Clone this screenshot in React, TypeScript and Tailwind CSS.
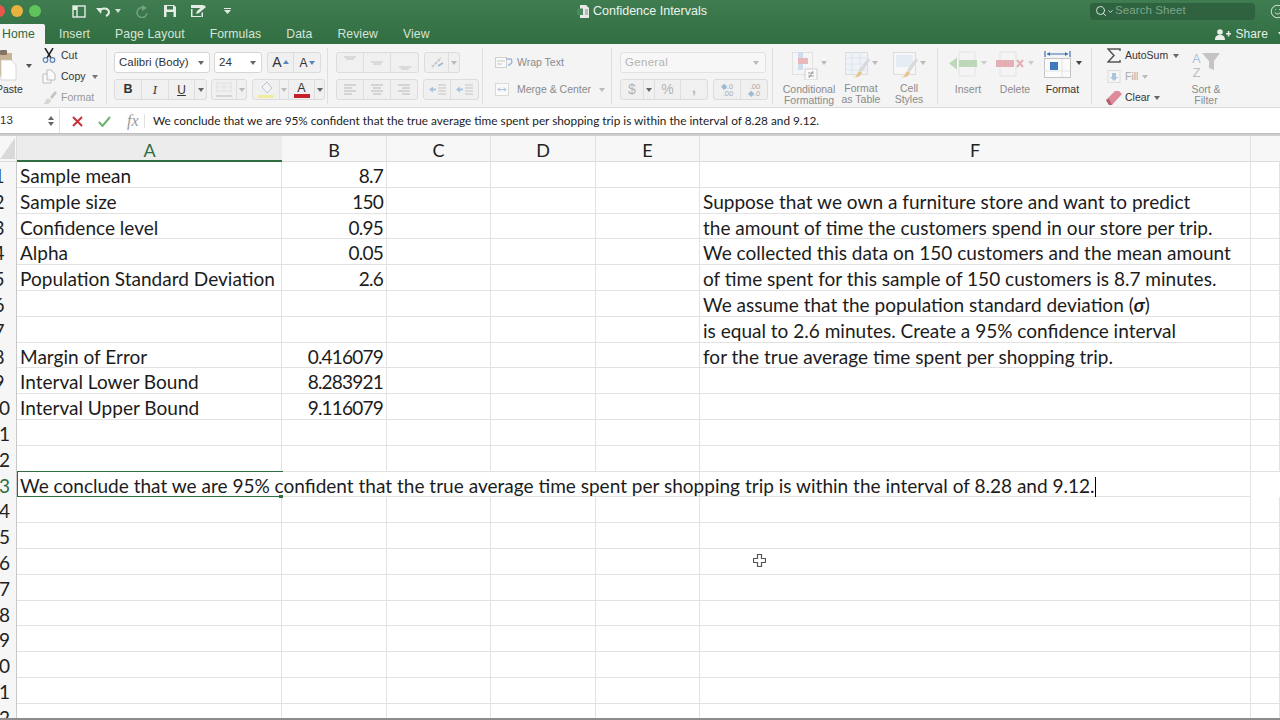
import React from "react";
import { Search, ChevronDown, Smile } from "lucide-react";

const cellFont = { fontFamily: "Lato, sans-serif" };

const tabs = ["Insert", "Page Layout", "Formulas", "Data", "Review", "View"];
const columns = ["B", "C", "D", "E"];

const sheetRows = [
    { a: "Sample mean", b: "8.7", f: "" },
    { a: "Sample size", b: "150", f: "Suppose that we own a furniture store and want to predict" },
    { a: "Confidence level", b: "0.95", f: "the amount of time the customers spend in our store per trip." },
    { a: "Alpha", b: "0.05", f: "We collected this data on 150 customers and the mean amount" },
    { a: "Population Standard Deviation", b: "2.6", f: "of time spent for this sample of 150 customers is 8.7 minutes." },
    { a: "", b: "", f: "sigma" },
    { a: "", b: "", f: "is equal to 2.6 minutes. Create a 95% confidence interval" },
    { a: "Margin of Error", b: "0.416079", f: "for the true average time spent per shopping trip." },
    { a: "Interval Lower Bound", b: "8.283921", f: "" },
    { a: "Interval Upper Bound", b: "9.116079", f: "" },
    { a: "", b: "", f: "" },
    { a: "", b: "", f: "" },
];

const conclusion = "We conclude that we are 95% confident that the true average time spent per shopping trip is within the interval of 8.28 and 9.12.";

const Caret = ({ className = "text-[#666]" }: { className?: string }) => (
    <svg width="6" height="4" viewBox="0 0 6 4" className={`shrink-0 ${className}`}>
        <path d="M0 0h6L3 4z" fill="currentColor" />
    </svg>
);

const RowHeader = ({ n, active }: { n: number; active?: boolean }) => (
    <div className="h-full overflow-hidden bg-[#f6f6f6] border-r border-[#c9c9c9]">
        <div className={`w-[36px] -ml-[19px] text-center text-[19px] leading-[27px] ${active ? "text-[#2f6e41]" : "text-[#222]"}`}>{n}</div>
    </div>
);

const SegButton = ({ w, children, last }: { w: number; children?: React.ReactNode; last?: boolean }) => (
    <div style={{ width: w }} className={`h-full flex items-center justify-center ${last ? "" : "border-r border-[#dedede]"}`}>
        {children}
    </div>
);

const Seg = ({ children, bg = "bg-[#f0f0f0]" }: { children: React.ReactNode; bg?: string }) => (
    <div className={`flex h-full rounded-[3px] border border-[#dcdcdc] ${bg}`}>{children}</div>
);

const Lines = ({ kind }: { kind: "left" | "center" | "right" }) => {
    const rows = kind === "left" ? "M1 1h12M1 4h8M1 7h12M1 10h8" : kind === "center" ? "M1 1h12M3 4h8M1 7h12M3 10h8" : "M1 1h12M5 4h8M1 7h12M5 10h8";
    return (
        <svg width="14" height="11" viewBox="0 0 14 11">
            <path d={rows} stroke="#b8b8b8" strokeWidth="1" fill="none" />
        </svg>
    );
};

const TitleBar = () => (
    <div className="h-[24px] flex items-center relative pb-[2px]">
        {/* traffic lights */}
        <div className="flex gap-[6px] -ml-[7px] w-[72px] shrink-0">
            <span className="w-[12px] h-[12px] rounded-full bg-[#e8574e]" />
            <span className="w-[12px] h-[12px] rounded-full bg-[#e9b23f]" />
            <span className="w-[12px] h-[12px] rounded-full bg-[#5fc45b]" />
        </div>
        <div className="flex items-center text-[#e4ece6] ml-[7px]">
            <svg width="14" height="13" viewBox="0 0 14 13" className="mr-[10px]">
                <rect x="1" y="1" width="12" height="11" fill="none" stroke="currentColor" strokeWidth="1.4" />
                <path d="M5 1v11" stroke="currentColor" strokeWidth="1.4" />
                <path d="M1 1h4v4h-4z" fill="currentColor" />
            </svg>
            <svg width="15" height="11" viewBox="0 0 15 11" className="mr-[4px]">
                <path d="M3 5c2-3 9-4 10 1 0 2-1 3-3 4" fill="none" stroke="currentColor" strokeWidth="2" />
                <path d="M0 2l6 0-1 6z" fill="currentColor" />
            </svg>
            <Caret className="text-[#d5e0d8] mr-[15px]" />
            <svg width="13" height="13" viewBox="0 0 13 13" className="mr-[14px] text-[#76a183]">
                <path d="M9 3.5A5 5 0 1 0 11 8" fill="none" stroke="currentColor" strokeWidth="1.5" />
                <path d="M6 0v6l5-3z" fill="currentColor" />
            </svg>
            <svg width="14" height="14" viewBox="0 0 14 14" className="mr-[13px]">
                <path d="M1 1h10l2 2v10H1z" fill="currentColor" />
                <rect x="4" y="2" width="6" height="3.5" fill="#3b7a4c" />
                <rect x="3.5" y="8" width="7" height="5" fill="#3b7a4c" />
            </svg>
            <svg width="17" height="14" viewBox="0 0 17 14" className="mr-[17px]">
                <path d="M1 1h12v3H1zM1 5h1.500v8H1zM1 12h11v1H1zM11.500 9v4H13V8z" fill="currentColor" />
                <path d="M6 10l1-3 7-6 2 2-7 6z" fill="currentColor" />
            </svg>
            <svg width="7" height="6" viewBox="0 0 7 6">
                <path d="M0 0h7v1H0zM0 2h7L3.500 6z" fill="currentColor" />
            </svg>
        </div>
        <div className="absolute left-[577px] top-[2px] flex items-center gap-[4px] text-[12.500px] text-[#eef3ef]">
            <svg width="12" height="13" viewBox="0 0 12 13">
                <path d="M3 0h6l3 3v10H3z" fill="#e8e8e8" />
                <rect x="0" y="3.500" width="6" height="6.500" fill="#4c8a5e" />
                <path d="M8 5h3M8 7h3M8 9h3" stroke="#8a8a8a" />
            </svg>
            Confidence Intervals
        </div>
        <div className="ml-auto flex items-center">
            <div className="w-[165px] h-[17px] rounded-[3px] bg-[#2f6340] flex items-center pl-[5px] text-[11.500px] text-[#7da68a]">
                <Search size={12} strokeWidth={2} className="text-[#dbe6de]" />
                <ChevronDown size={7} strokeWidth={3} className="text-[#dbe6de] mr-[1px]" />
                <span className="tracking-[0.1px]">Search Sheet</span>
            </div>
            <Smile size={15} strokeWidth={1.5} className="text-[#e4ece6] ml-[15px] -mr-[5px]" />
        </div>
    </div>
);

const Tabs = () => (
    <div className="h-[20px] flex items-end text-[12.200px] tracking-[0.1px]">
        <div className="w-[45px] h-full bg-[#f4f4f4] rounded-tr-[2px] text-[#2d6a3e] pl-[2px] leading-[20px]">Home</div>
        <div className="flex gap-[25px] pl-[14px] text-[#d7e3da] leading-[20px] h-full">
            {tabs.map((t) => (
                <span key={t}>{t}</span>
            ))}
        </div>
        <div className="ml-auto flex items-center h-full text-[#e8efe9] text-[12px] leading-[20px] gap-[4px] -mr-[4px]">
            <svg width="16" height="11" viewBox="0 0 16 11">
                <circle cx="5" cy="3" r="2.800" fill="currentColor" />
                <path d="M0 11c0-4 2-5 5-5s5 1 5 5zM11 4h5v1.500h-5zM12.800 2h1.500v5.500h-1.500z" fill="currentColor" />
            </svg>
            Share
            <Caret className="text-[#e8efe9] ml-[6px]" />
        </div>
    </div>
);

const ClipboardGroup = () => (
    <div className="w-[107px] h-[56px] shrink-0 flex overflow-hidden text-[10.500px] border-r border-[#dfdfdf]">
        <div className="w-[42px] shrink-0 flex flex-col">
            <div className="flex items-center h-[33px] pt-[2px]">
                <svg width="22" height="31" viewBox="0 0 22 31" className="-ml-[5px] shrink-0">
                    <rect x="0" y="3" width="17" height="23" rx="1" fill="#c9b394" />
                    <rect x="5" y="0" width="7" height="5" rx="1" fill="#7f7466" />
                    <path d="M6 10h10l5 5v15H6z" fill="#fff" stroke="#c8c8c8" strokeWidth="0.700" />
                </svg>
                <Caret className="text-[#555] ml-[9px]" />
            </div>
            <span className="text-[#333] mt-[1px] leading-[14px] -ml-[4px]">Paste</span>
        </div>
        <div className="flex flex-col gap-[6px] text-[#333]">
            <div className="flex items-center h-[15px]">
                <svg width="14" height="15" viewBox="0 0 14 15" className="mr-[5px]">
                    <path d="M3 0l6 10M11 0L5 10" stroke="#222" strokeWidth="1.500" />
                    <circle cx="3.500" cy="12" r="2.300" fill="none" stroke="#5a83b5" strokeWidth="1.200" />
                    <circle cx="10.500" cy="12" r="2.300" fill="none" stroke="#5a83b5" strokeWidth="1.200" />
                </svg>
                Cut
            </div>
            <div className="flex items-center h-[15px]">
                <svg width="14" height="15" viewBox="0 0 14 15" className="mr-[5px]">
                    <path d="M5 1h4l4 4v6H5zM5 5H1v9h8v-3" fill="#fafafa" stroke="#bcbcbc" />
                </svg>
                Copy
                <Caret className="text-[#777] ml-[6px]" />
            </div>
            <div className="flex items-center h-[15px] text-[#999]">
                <svg width="15" height="14" viewBox="0 0 15 14" className="mr-[4px]">
                    <path d="M8 6l5-6 2 2-5 6z" fill="#c4c4c4" />
                    <path d="M0 13c3 0 3-2 4-4 1-2 3-2 5 0 0 3-3 5-9 4z" fill="#d6d6d6" />
                </svg>
                Format
            </div>
        </div>
    </div>
);

const FontGroup = () => (
    <div className="w-[221px] h-[56px] shrink-0 pl-[7px] pt-[4px] flex flex-col gap-[6px] text-[#333] border-r border-[#dfdfdf]">
        <div className="flex h-[21px] gap-[4px]">
            <div className="w-[96px] h-full bg-white border border-[#d6d6d6] rounded-[3px] flex items-center justify-between px-[4px] text-[11.500px]">
                Calibri (Body)<Caret className="text-[#666] mr-[1px]" />
            </div>
            <div className="w-[48px] h-full bg-white border border-[#d6d6d6] rounded-[3px] flex items-center justify-between px-[4px] text-[11.500px]">
                24<Caret className="text-[#666] mr-[1px]" />
            </div>
            <div className="ml-[1px]">
                <Seg>
                    <SegButton w={26}>
                        <span className="text-[14px]">A</span>
                        <svg width="6" height="4" viewBox="0 0 6 4" className="ml-[1px] mb-[2px]"><path d="M0 4h6L3 0z" fill="#5a83b5" /></svg>
                    </SegButton>
                    <SegButton w={26} last>
                        <span className="text-[12px]">A</span>
                        <svg width="6" height="4" viewBox="0 0 6 4" className="ml-[1px]"><path d="M0 0h6L3 4z" fill="#5a83b5" /></svg>
                    </SegButton>
                </Seg>
            </div>
        </div>
        <div className="flex h-[21px] gap-[4px]">
            <Seg>
                <SegButton w={27}><span className="font-bold text-[12.500px]">B</span></SegButton>
                <SegButton w={27}><span className="italic font-serif text-[13px]">I</span></SegButton>
                <SegButton w={26}><span className="underline text-[12px]">U</span></SegButton>
                <SegButton w={11} last><Caret className="text-[#666]" /></SegButton>
            </Seg>
            <Seg>
                <SegButton w={25}>
                    <svg width="16" height="15" viewBox="0 0 16 15"><path d="M0 1h16M0 5h16M0 9h16M1 1v9M8 1v9M15 1v9" stroke="#e2e2e2" /><path d="M0 14h16" stroke="#bbb" /></svg>
                </SegButton>
                <SegButton w={9} last><Caret className="text-[#bbb]" /></SegButton>
            </Seg>
            <div className="ml-[1px]">
                <Seg>
                    <SegButton w={27}>
                        <svg width="16" height="18" viewBox="0 0 16 18"><path d="M4 6l5-5 5 6-5 5z" fill="#f4f4f4" stroke="#b9c4cf" /><rect x="0" y="14" width="16" height="3" fill="#f0ec9c" /></svg>
                    </SegButton>
                    <SegButton w={9}><Caret className="text-[#bbb]" /></SegButton>
                    <SegButton w={26}>
                        <div className="flex flex-col items-center leading-[12px] text-[12.500px]">
                            A
                            <span className="w-[16px] h-[4px] bg-[#c8202b]" />
                        </div>
                    </SegButton>
                    <SegButton w={9} last><Caret className="text-[#666]" /></SegButton>
                </Seg>
            </div>
        </div>
    </div>
);

const AlignmentGroup = () => (
    <div className="w-[155px] h-[56px] shrink-0 pl-[8px] pt-[4px] flex flex-col gap-[6px] border-r border-[#dfdfdf]">
        <div className="flex h-[21px] gap-[5px]">
            <Seg>
                {[4, 9, 14].map((y, i) => (
                    <SegButton key={y} w={27} last={i === 2}>
                        <svg width="14" height="17" viewBox="0 0 14 17"><path d={`M1 ${y - 1}h12M3 ${y + 1}h8`} stroke="#c4c4c4" /></svg>
                    </SegButton>
                ))}
            </Seg>
            <Seg>
                <SegButton w={24}>
                    <svg width="14" height="13" viewBox="0 0 14 13"><path d="M2 11L11 2" stroke="#c8c8c8" strokeWidth="2" strokeDasharray="3 1" /><path d="M8 10l5-3" stroke="#9db5d0" strokeWidth="1.500" /></svg>
                </SegButton>
                <SegButton w={10} last><Caret className="text-[#bbb]" /></SegButton>
            </Seg>
        </div>
        <div className="flex h-[21px] gap-[5px]">
            <Seg>
                <SegButton w={27}><Lines kind="left" /></SegButton>
                <SegButton w={27}><Lines kind="center" /></SegButton>
                <SegButton w={26} last><Lines kind="right" /></SegButton>
            </Seg>
            <Seg>
                {[0, 1].map((i) => (
                    <SegButton key={i} w={27} last={i === 1}>
                        <svg width="17" height="11" viewBox="0 0 17 11"><path d="M0 5.500l4-3v6zM4 4.500h3v2H4z" fill="#a9c3de" /><path d="M9 1h8M9 4h8M9 7h8M9 10h8" stroke="#c4c4c4" /></svg>
                    </SegButton>
                ))}
            </Seg>
        </div>
    </div>
);

const WrapGroup = () => (
    <div className="w-[129px] h-[56px] shrink-0 pl-[12px] pt-[4px] flex flex-col gap-[6px] text-[10.500px] text-[#8b8b8b] border-r border-[#dfdfdf]">
        <div className="flex items-center h-[21px]">
            <svg width="18" height="13" viewBox="0 0 18 13" className="mr-[4px]">
                <rect x="0.500" y="1.500" width="11" height="10" fill="#fafafa" stroke="#d0d0d0" />
                <path d="M2 5h8M2 8h5" stroke="#c4c4c4" />
                <path d="M11 3h5c2 3 0 6-3 6" fill="none" stroke="#9db9d6" strokeWidth="1.500" />
            </svg>
            Wrap Text
        </div>
        <div className="flex items-center h-[21px]">
            <svg width="18" height="13" viewBox="0 0 18 13" className="mr-[4px]">
                <rect x="0.500" y="0.500" width="13" height="12" fill="#fafafa" stroke="#dadada" />
                <path d="M3 6.500h8M3 6.500l2-2M3 6.500l2 2M11 6.500l-2-2M11 6.500l-2 2" stroke="#a6bed7" fill="none" />
            </svg>
            Merge &amp; Center
            <Caret className="text-[#bbb] ml-[8px]" />
        </div>
    </div>
);

const NumberGroup = () => (
    <div className="w-[161px] h-[56px] shrink-0 pl-[8px] pt-[4px] flex flex-col gap-[6px] text-[#b4b4b4] border-r border-[#dfdfdf]">
        <div className="w-[146px] h-[21px] shrink-0 bg-[#f7f7f7] border border-[#e2e2e2] rounded-[3px] flex items-center justify-between px-[4px] text-[11.500px] tracking-[0.3px]">
            General<Caret className="text-[#bbb] mr-[2px]" />
        </div>
        <div className="flex h-[21px] gap-[5px] text-[14px]">
            <Seg>
                <SegButton w={23}>$</SegButton>
                <SegButton w={11}><Caret className="text-[#666]" /></SegButton>
                <SegButton w={26}>%</SegButton>
                <SegButton w={26} last><span className="font-bold leading-[8px] -mt-[4px]">,</span></SegButton>
            </Seg>
            <Seg>
                <SegButton w={27}>
                    <div className="flex flex-col text-[7.500px] leading-[7px] items-end text-[#aaa]"><span><span className="text-[#9db9d6]">◆</span>.0</span><span>.00</span></div>
                </SegButton>
                <SegButton w={26} last>
                    <div className="flex flex-col text-[7.500px] leading-[7px] items-end text-[#aaa]"><span>.00</span><span><span className="text-[#9db9d6]">◆</span>.0</span></div>
                </SegButton>
            </Seg>
        </div>
    </div>
);

const BrushGrid = ({ colored }: { colored?: boolean }) => (
    <svg width="26" height="27" viewBox="0 0 26 27">
        <rect x="0.500" y="0.500" width="22" height="22" fill={colored ? "#eef3f9" : "#f7f7f7"} stroke="#dcdcdc" />
        {colored ? <path d="M0 6h22M0 12h22M0 18h22M7 0v22M15 0v22" stroke="#dfe4ea" /> : <rect x="3" y="3" width="17" height="12" fill="#e6ecf4" />}
        <path d="M14 18l9-12 2 2-8 12z" fill="#d9d9d9" />
        <path d="M8 25c3 0 4-2 5-5 2-2 4 0 4 1-1 3-4 5-9 4z" fill="#e8c48f" />
    </svg>
);

const StylesGroup = () => (
    <div className="w-[165px] h-[56px] shrink-0 flex pt-[4px] pl-[6px] text-[10.500px] text-[#8b8b8b] text-center leading-[11px] border-r border-[#dfdfdf]">
        <div className="w-[60px] flex flex-col items-center">
            <div className="h-[28px] flex items-start">
                <svg width="26" height="28" viewBox="0 0 26 28">
                    <rect x="0.500" y="0.500" width="20" height="22" fill="#f5f5f5" stroke="#e2e2e2" />
                    <rect x="6" y="0" width="5" height="18" fill="#cfdcec" />
                    <rect x="6" y="6" width="10" height="6" fill="#e8b9bb" />
                    <rect x="13" y="17" width="12" height="11" fill="#fafafa" stroke="#cfcfcf" />
                    <path d="M16 21h6M16 24h6M21 19l-4 7" stroke="#888" strokeWidth="0.800" />
                </svg>
                <Caret className="text-[#bbb] mt-[9px] ml-[3px]" />
            </div>
            <span className="mt-[4px]">Conditional<br />Formatting</span>
        </div>
        <div className="w-[44px] flex flex-col items-center">
            <div className="h-[28px] flex items-start">
                <BrushGrid colored />
                <Caret className="text-[#bbb] mt-[9px] ml-[1px]" />
            </div>
            <span className="mt-[4px]">Format<br />as Table</span>
        </div>
        <div className="w-[44px] ml-[4px] flex flex-col items-center">
            <div className="h-[28px] flex items-start">
                <BrushGrid />
                <Caret className="text-[#bbb] mt-[9px] ml-[1px]" />
            </div>
            <span className="mt-[4px]">Cell<br />Styles</span>
        </div>
    </div>
);

const CellsGroup = () => (
    <div className="w-[154px] h-[56px] shrink-0 flex pt-[3px] pl-[6px] text-[10.500px] text-[#8b8b8b] border-r border-[#dfdfdf]">
        <div className="w-[48px] flex flex-col items-center">
            <div className="h-[30px] flex items-start">
                <svg width="29" height="26" viewBox="0 0 29 26">
                    <path d="M10 1h16v24H10z" fill="none" stroke="#e4e4e4" />
                    <rect x="10" y="9" width="18" height="7" fill="#bcd8b9" />
                    <path d="M0 12.500l8-6v12z" fill="#bcd8b9" />
                </svg>
                <Caret className="text-[#ccc] mt-[10px] ml-[3px]" />
            </div>
            <span className="leading-[13px] mt-[2px]">Insert</span>
        </div>
        <div className="w-[46px] flex flex-col items-center">
            <div className="h-[30px] flex items-start">
                <svg width="29" height="26" viewBox="0 0 29 26">
                    <path d="M4 1h16v24H4z" fill="none" stroke="#e4e4e4" />
                    <rect x="0" y="9" width="18" height="7" fill="#e4aeb4" />
                    <path d="M21 9l6 7M27 9l-6 7" stroke="#e4aeb4" strokeWidth="2" />
                </svg>
                <Caret className="text-[#ccc] mt-[10px] ml-[3px]" />
            </div>
            <span className="leading-[13px] mt-[2px]">Delete</span>
        </div>
        <div className="w-[49px] flex flex-col items-center text-[#333]">
            <div className="h-[30px] flex items-start">
                <svg width="27" height="27" viewBox="0 0 27 27">
                    <path d="M1 0v6M26 0v6M3 3h21" stroke="#3c6fb0" strokeWidth="1.200" />
                    <path d="M3 3l3-2v4zM24 3l-3-2v4z" fill="#3c6fb0" />
                    <rect x="0.500" y="7.500" width="26" height="19" fill="#fbfbfb" stroke="#c4c4c4" />
                    <path d="M0 20h26M18 8v18" stroke="#e2e2e2" />
                    <rect x="6" y="11" width="8" height="8" fill="#3e78bd" />
                </svg>
                <Caret className="text-[#444] mt-[10px] ml-[5px]" />
            </div>
            <span className="leading-[13px] mt-[2px]">Format</span>
        </div>
    </div>
);

const EditGroup = () => (
    <div className="flex-1 h-[56px] flex pl-[15px] text-[10.500px] text-[#333]">
        <div className="flex flex-col gap-[6px] w-[83px] shrink-0">
            <div className="flex items-center h-[15px]">
                <svg width="14" height="15" viewBox="0 0 14 15" className="mr-[4px]">
                    <path d="M13 3V1H1l6 6.500L1 14h12v-2" fill="none" stroke="#555" strokeWidth="1.500" />
                </svg>
                AutoSum
                <Caret className="text-[#666] ml-[5px]" />
            </div>
            <div className="flex items-center h-[15px] text-[#aaa]">
                <svg width="14" height="13" viewBox="0 0 14 13" className="mr-[4px]">
                    <rect x="1" y="0.500" width="12" height="12" fill="#f5f5f5" stroke="#dcdcdc" />
                    <path d="M5 3h4v4h2l-4 4-4-4h2z" fill="#a9c3de" />
                </svg>
                Fill
                <Caret className="text-[#bbb] ml-[4px]" />
            </div>
            <div className="flex items-center h-[15px]">
                <svg width="16" height="14" viewBox="0 0 16 14" className="-ml-[1px] mr-[3px]">
                    <path d="M0 9l9-9h4l3 3-10 11H3z" fill="#dd8a9a" />
                    <path d="M0 9l3 5h3L3 8z" fill="#b05f70" />
                </svg>
                Clear
                <Caret className="text-[#666] ml-[4px]" />
            </div>
        </div>
        <div className="flex flex-col items-center pt-[4px] w-[32px] text-[#8b8b8b] leading-[11px] text-center">
            <div className="h-[28px] flex items-start">
                <div className="flex flex-col text-[12.500px] leading-[14px] w-[11px] items-center shrink-0">
                    <span className="text-[#a9c3de]">A</span>
                    <span className="text-[#bdbdbd]">Z</span>
                </div>
                <svg width="19" height="19" viewBox="0 0 19 19" className="shrink-0">
                    <path d="M0 1h18l-6 8v9l-5-2V9z" fill="#c4c4c4" />
                </svg>
            </div>
            <span className="mt-[4px] whitespace-nowrap">Sort &amp;<br />Filter</span>
        </div>
    </div>
);

const Ribbon = () => (
    <div className="h-[64px] bg-[#f4f4f4] flex pt-[4px] border-b border-[#dbdbdb]">
        <ClipboardGroup />
        <FontGroup />
        <AlignmentGroup />
        <WrapGroup />
        <NumberGroup />
        <StylesGroup />
        <CellsGroup />
        <EditGroup />
    </div>
);

const FormulaBar = () => (
    <div className="h-[26px] bg-white flex items-center border-b border-[#bdbdbd] pt-[1px]">
        <div className="w-[60px] h-full shrink-0 flex items-center justify-between border-r border-[#e0e0e0] pr-[5px] text-[11.500px] text-[#333]">
            13
            <div className="flex flex-col gap-[2px]">
                <svg width="6" height="4" viewBox="0 0 6 4"><path d="M0 4h6L3 0z" fill="#666" /></svg>
                <svg width="6" height="4" viewBox="0 0 6 4"><path d="M0 0h6L3 4z" fill="#666" /></svg>
            </div>
        </div>
        <svg width="11" height="11" viewBox="0 0 11 11" className="ml-[12px]"><path d="M1 1l9 9M10 1l-9 9" stroke="#c8323a" strokeWidth="2" /></svg>
        <svg width="13" height="11" viewBox="0 0 13 11" className="ml-[15px]"><path d="M1 6l3.500 4L12 1" fill="none" stroke="#6fb36c" strokeWidth="2" /></svg>
        <span className="ml-[16px] w-[17px] italic text-[16px] text-[#999]" style={{ fontFamily: "'Liberation Serif', serif" }}>fx</span>
        <span className="w-px h-[14px] bg-[#e0e0e0]" />
        <span className="ml-[8px] text-[11.800px] text-[#222] whitespace-nowrap" style={cellFont}>{conclusion}</span>
    </div>
);

const ColumnHeader = () => (
    <div className="h-[28px] grid grid-cols-[17px_265px_105px_104px_105px_104px_551px_1fr] border-t-[2px] border-[#cfcfcf] border-b border-b-[#dcdcdc] bg-[#f7f7f7] text-[18px] text-[#222] text-center leading-[28px]" style={cellFont}>
        <div className="border-r border-[#dedede] overflow-hidden">
            <svg width="15" height="24" viewBox="0 0 15 24"><path d="M15 2v21H0z" fill="#d9d9d9" /></svg>
        </div>
        <div className="bg-[#ececec] text-[#2f6e41] border-b-[2px] border-[#2f6e41] h-[26px]">A</div>
        {columns.map((c) => (
            <div key={c} className="border-r border-[#e2e2e2]">{c}</div>
        ))}
        <div className="border-r border-[#e2e2e2]">F</div>
        <div />
    </div>
);

const Cell = ({ children, className = "" }: { children?: React.ReactNode; className?: string }) => (
    <div className={`border-r border-b border-[#e2e2e2] h-full whitespace-nowrap px-[3px] leading-[28px] ${className}`}>{children}</div>
);

const Row = ({ n, a, b, f }: { n: number; a: string; b: string; f: string }) => (
    <div className="h-[25.800px] grid grid-rows-[25.800px] grid-cols-[17px_265px_105px_104px_105px_104px_551px_1fr]">
        <RowHeader n={n} />
        <Cell>{a}</Cell>
        <Cell className="text-right tracking-[-0.8px]">{b}</Cell>
        <Cell />
        <Cell />
        <Cell />
        <Cell>
            {f === "sigma" ? (
                <>We assume that the population standard deviation (<b><i>σ</i></b>)</>
            ) : f}
        </Cell>
        <Cell />
    </div>
);

const SelectedRow = () => (
    <div className="h-[25.800px] grid grid-rows-[25.800px] grid-cols-[17px_265px_105px_104px_105px_104px_551px_1fr]">
        <RowHeader n={13} active />
        <div className="col-span-5 relative border-r border-b border-[#e2e2e2] whitespace-nowrap px-[3px] leading-[27px]">
            {conclusion}
            <span className="inline-block w-px h-[20px] bg-black align-middle -mt-[2px]" />
            <div className="absolute left-0 -top-px w-[266px] -bottom-px border-l border-t border-b border-[#2f6e41]" />
            <div className="absolute left-[262px] -bottom-[2px] w-[4px] h-[3px] bg-[#2f6e41]" />
        </div>
        <Cell />
    </div>
);

export default function App() {
    return (
        <div className="w-[1280px] h-[720px] overflow-hidden flex flex-col bg-white relative" style={{ fontFamily: "'Liberation Sans', Arial, sans-serif" }}>
            <div className="h-[44px] bg-gradient-to-b from-[#3f7d50] to-[#316f42] shrink-0">
                <TitleBar />
                <Tabs />
            </div>
            <Ribbon />
            <FormulaBar />
            <ColumnHeader />
            <div className="flex-1 overflow-hidden text-[19.050px] text-[#1c1c1c]" style={cellFont}>
                {sheetRows.map((r, i) => (
                    <Row key={i} n={i + 1} a={r.a} b={r.b} f={r.f} />
                ))}
                <SelectedRow />
                {[14, 15, 16, 17, 18, 19, 20, 21, 22].map((n) => (
                    <Row key={n} n={n} a="" b="" f="" />
                ))}
            </div>
            <div className="h-[2px] bg-[#8c8c8c] shrink-0" />
            {/* mouse cursor over the sheet */}
            <svg width="13" height="13" viewBox="0 0 13 13" className="absolute left-[753px] top-[554px]">
                <path d="M4.500 0.500h4v4h4v4h-4v4h-4v-4h-4v-4h4z" fill="#fff" stroke="#555" strokeWidth="1.200" />
            </svg>
        </div>
    );
}
